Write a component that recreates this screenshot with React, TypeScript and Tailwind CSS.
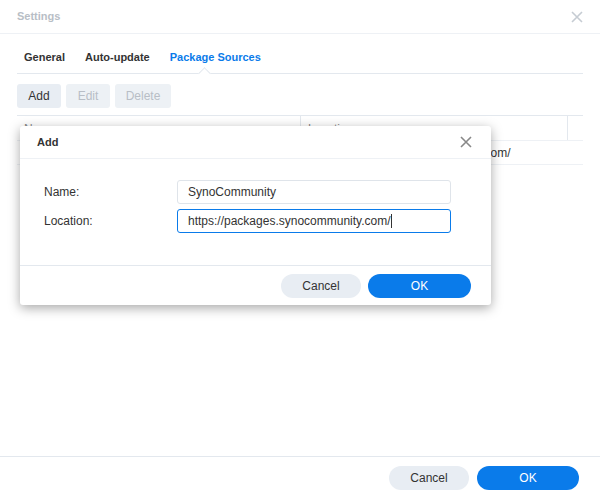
import React from "react";

const X = ({ c = "#b0b7c0", s = 12 }: { c?: string; s?: number }) => (
  <svg width={s} height={s} viewBox="0 0 12 12"><path d="M1 1L11 11M11 1L1 11" stroke={c} strokeWidth="1.6" /></svg>
);

export default function App() {
  return (
    <div className="relative w-[600px] h-[498px] bg-white text-[12px] text-[#333] flex flex-col" style={{ fontFamily: '"Liberation Sans",Arial,sans-serif' }}>
      <div className="h-[34px] flex items-center justify-between px-[17px] border-b border-[#eef1f5]">
        <span className="font-bold text-[11px] text-[#b8bec6]">Settings</span>
        <X c="#c6ccd3" />
      </div>
      <div className="flex-1 px-[17px]">
        <div className="relative flex gap-[20px] pl-[7px] h-[40px] items-center pt-[7px] border-b border-[#e3e8ee] text-[11px] font-bold">
          <span className="text-[#333]">General</span>
          <span className="text-[#333]">Auto-update</span>
          <span className="text-[#0a7bea]">Package Sources</span>
          <div className="absolute left-[183px] bottom-[-5px] w-[9px] h-[9px] rotate-45 bg-white border-l border-t border-[#e3e8ee]" />
        </div>
        <div className="flex gap-[5px] mt-[10px]">
          <div className="w-[44px] h-[24px] rounded-[3px] bg-[#e8edf3] flex items-center justify-center">Add</div>
          <div className="w-[44px] h-[24px] rounded-[3px] bg-[#edf1f5] text-[#b8bec6] flex items-center justify-center">Edit</div>
          <div className="w-[56px] h-[24px] rounded-[3px] bg-[#edf1f5] text-[#b8bec6] flex items-center justify-center">Delete</div>
        </div>
        <div className="mt-[7px] border-t border-[#e3e8ee]">
          <div className="flex h-[25px] border-b border-[#eef1f5] text-[#888]">
            <div className="w-[284px] border-r border-[#e3e8ee] pl-[7px] pt-[4px]">Name</div>
            <div className="w-[267px] border-r border-[#e3e8ee] pl-[7px] pt-[4px]">Location</div>
          </div>
          <div className="flex h-[24px] border-b border-[#eef1f5] items-center">
            <div className="w-[284px] pl-[7px]">SynoCommunity</div>
            <div className="pl-[7px]">https://packages.synocommunity.com/</div>
          </div>
        </div>
      </div>
      <div className="h-[42px] border-t border-[#e3e8ee] flex items-center justify-end gap-[8px] pr-[21px]">
        <div className="w-[80px] h-[24px] rounded-full bg-[#e8edf3] flex items-center justify-center">Cancel</div>
        <div className="w-[102px] h-[24px] rounded-full bg-[#0a7bea] text-white flex items-center justify-center">OK</div>
      </div>

      <div className="absolute left-[20px] top-[126px] w-[471px] h-[179px] bg-white rounded-[3px] shadow-[0_3px_12px_rgba(0,0,0,0.35)] flex flex-col">
        <div className="h-[33px] flex items-center justify-between pl-[17px] pr-[19px] border-b border-[#eef1f5]">
          <span className="font-bold text-[11px]">Add</span>
          <X c="#888" />
        </div>
        <div className="flex-1 pt-[21px] pl-[24px] flex flex-col gap-[5px]">
          <div className="flex items-center h-[24px]">
            <span className="w-[133px]">Name:</span>
            <div className="w-[274px] h-[24px] border border-[#dfe4ea] rounded-[3px] flex items-center pl-[10px]">SynoCommunity</div>
          </div>
          <div className="flex items-center h-[24px]">
            <span className="w-[133px]">Location:</span>
            <div className="w-[274px] h-[24px] border border-[#0a7bea] rounded-[3px] flex items-center pl-[10px]">https://packages.synocommunity.com/<span className="w-px h-[14px] bg-[#333]" /></div>
          </div>
        </div>
        <div className="h-[40px] border-t border-[#e3e8ee] flex items-center justify-end gap-[7px] pr-[20px]">
          <div className="w-[80px] h-[24px] rounded-full bg-[#e8edf3] flex items-center justify-center">Cancel</div>
          <div className="w-[103px] h-[24px] rounded-full bg-[#0a7bea] text-white flex items-center justify-center">OK</div>
        </div>
      </div>
    </div>
  );
}
